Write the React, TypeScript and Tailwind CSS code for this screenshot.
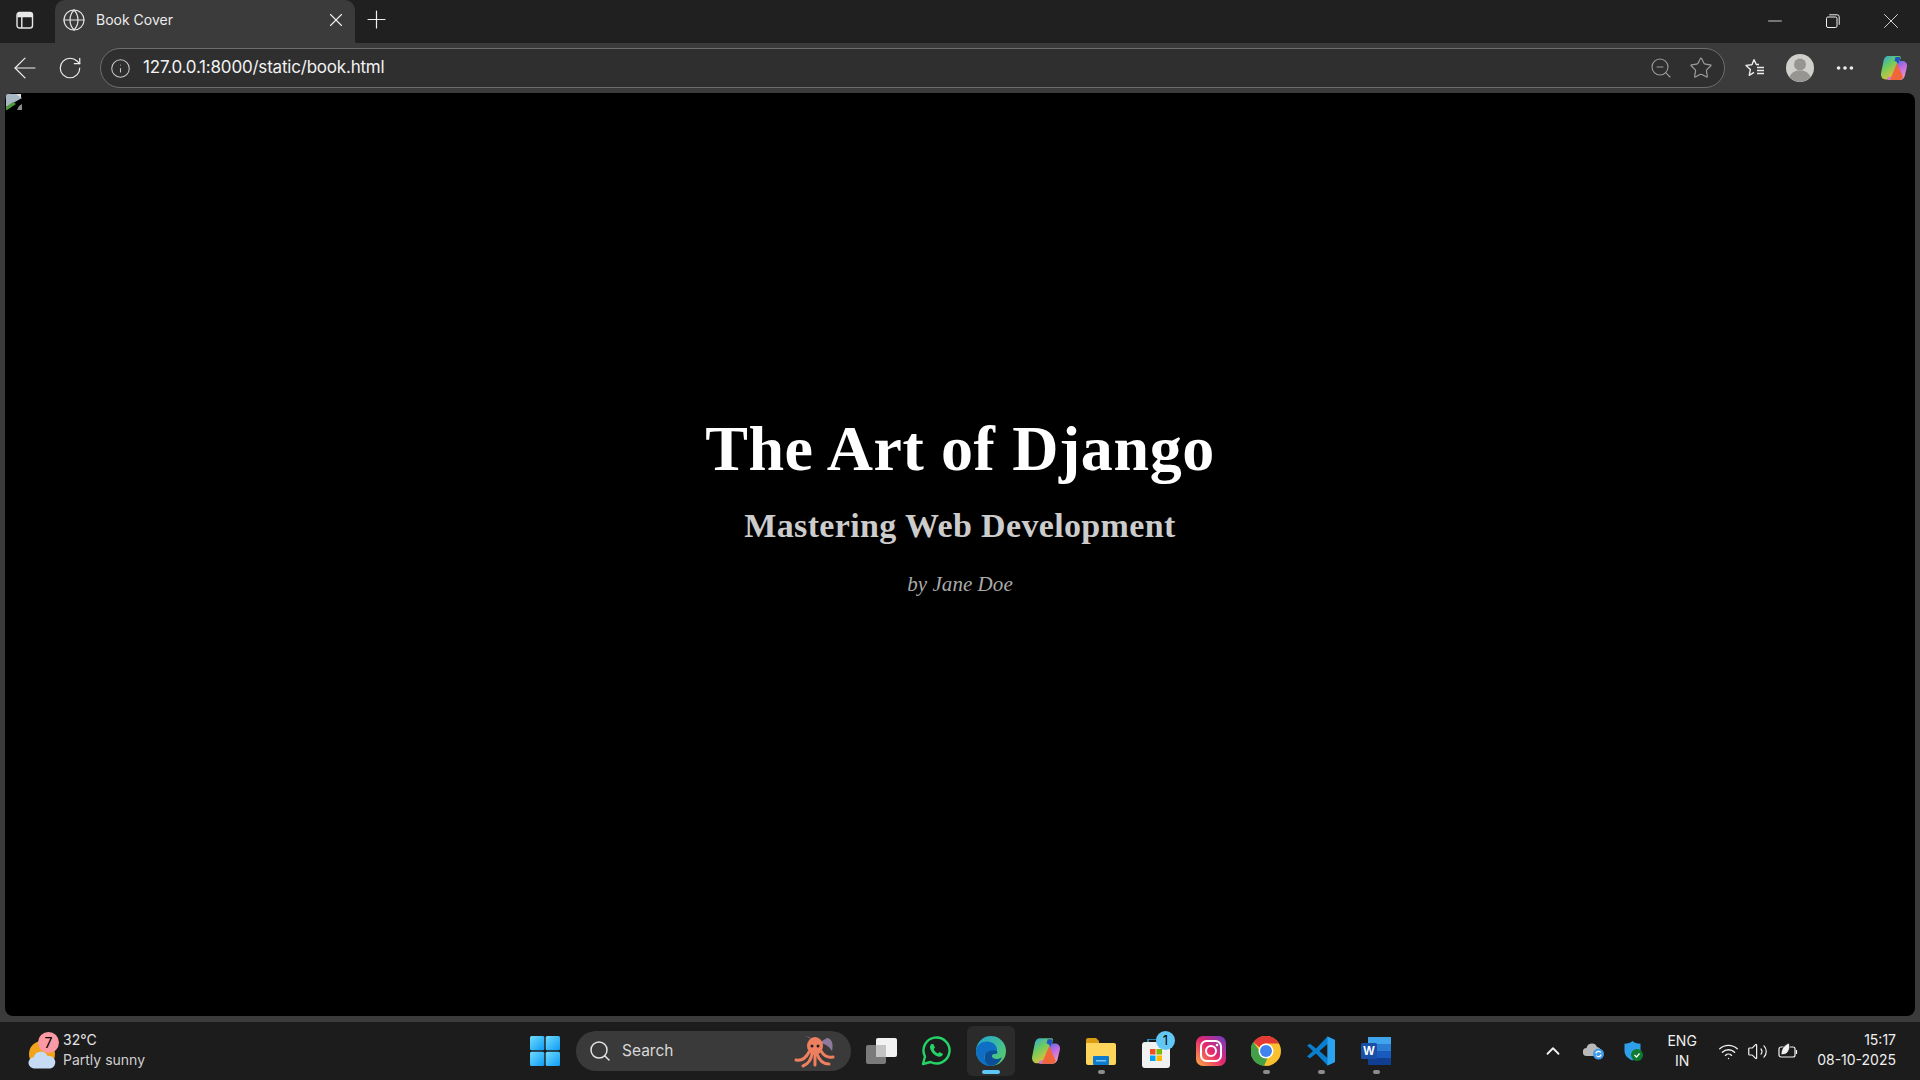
import React from "react";
import { ArrowLeft, RotateCw, Info, Globe, X, Plus, Minus, ZoomOut, Star, MoreHorizontal, ChevronUp, Search, Wifi, Volume2 } from "lucide-react";

const UI_FONT = "font-['Inter','Noto_Sans',sans-serif]";

const SidebarIcon = () => (
  <svg width="18" height="18" viewBox="0 0 18 18" fill="none" stroke="#e8e8e8" strokeWidth="1.4">
    <rect x="1" y="1.5" width="15.5" height="15.5" rx="2.5" />
    <path d="M1 5.5h15.5M5.8 5.5v11.5" />
    <rect x="1.5" y="2" width="14.5" height="3.5" fill="#e8e8e8" stroke="none" />
  </svg>
);

const RestoreIcon = () => (
  <svg width="14" height="14" viewBox="0 0 14 14" fill="none" stroke="#f0f0f0" strokeWidth="1">
    <rect x="0.5" y="3" width="10.5" height="10.5" rx="1.5" />
    <path d="M3.2 0.8h8a2 2 0 0 1 2 2v8" />
  </svg>
);

const FavoritesIcon = () => (
  <svg width="22" height="22" viewBox="0 0 22 22" fill="none" stroke="#ececec" strokeWidth="1.4" strokeLinejoin="round">
    <path d="M10 2.500l2.300 5H15M8 7.700l-6 .7 4.400 4-1.200 6 4.800-3M8 7.700l2-5.200" />
    <path d="M13 10.500h7M13 13.500h7M13 16.500h7" />
  </svg>
);

const Avatar = () => (
  <svg width="28" height="28" viewBox="0 0 28 28">
    <circle cx="14" cy="14" r="14" fill="#d0cfcb" />
    <circle cx="14" cy="10.500" r="6" fill="#979592" />
    <path d="M3.500 23c2-5 6-6.500 10.500-6.500s8.500 1.500 10.500 6.500a14 14 0 0 1-21 0z" fill="#979592" />
  </svg>
);

const CopilotIcon = ({ size = 28, id }: { size?: number; id: string }) => (
  <svg width={size} height={size} viewBox="0 0 28 28">
    <defs>
      <linearGradient id={id + "a"} x1="0" y1="0" x2="0.6" y2="1">
        <stop offset="0" stopColor="#27a4e8" />
        <stop offset="0.45" stopColor="#6ccb5f" />
        <stop offset="1" stopColor="#f5c030" />
      </linearGradient>
      <linearGradient id={id + "b"} x1="0.2" y1="0" x2="0.8" y2="1">
        <stop offset="0" stopColor="#3a6fe0" />
        <stop offset="0.5" stopColor="#c46be0" />
        <stop offset="1" stopColor="#f0a0c0" />
      </linearGradient>
    </defs>
    <path d="M8 2h11c1.500 0 2 1.200 1.500 2.500L14 23c-.5 1.500-1.500 2.500-3.500 2.500H6C2.500 25.500 0.500 22.500 1 19.500L3.500 7C4 4 5.500 2 8 2z" fill={`url(#${id}a)`} />
    <path d="M16 7h6.500c3 0 5 2.500 4.500 5.500L25 21c-.5 3-2.500 5-5.500 5H9c-1.500 0-2-1.200-1.500-2.500L8 23c3 0 4.500-.5 5.500-3l4-11c.3-1 0-2-1.500-2z" fill={`url(#${id}b)`} />
    <path d="M17 9l-7 17h9c2 0 3.500-1 4-3z" fill="#f0663a" />
    <path d="M15.500 3h3.500c1.500 0 1.500 1.200 1 2.500L18 10c-1-2-2-3-3.500-3z" fill="#1d55c4" />
  </svg>
);

const BrokenImage = () => (
  <svg width="16" height="16" viewBox="0 0 16 16">
    <path d="M0 2a2 2 0 0 1 2-2h9l5 4-16 9z" fill="#a9b6c4" />
    <path d="M0 13l7-5 3 2-9 6H0z" fill="#4f9a3c" />
    <path d="M10 0l5 0v4z" fill="#e0e0e0" />
    <path d="M13 12l3-2v6h-5z" fill="#8c8c8c" />
  </svg>
);

const WeatherIcon = () => (
  <div className="relative h-[40px] w-[36px]">
    <div className="absolute left-[4px] top-[10px] h-[26px] w-[26px] rounded-full bg-[#f2a31b]" />
    <svg className="absolute left-[3px] top-[19px]" width="30" height="20" viewBox="0 0 32 20">
      <path d="M7 19a6 6 0 0 1-1-12 8 8 0 0 1 15-1 6.500 6.500 0 0 1 3 13z" fill="#c6dcf5" />
    </svg>
    <div className="absolute left-[13px] top-[1px] flex h-[21px] w-[21px] items-center justify-center rounded-full bg-[#fb99a5] text-[14px] leading-none text-black">
      7
    </div>
  </div>
);

const WindowsLogo = () => (
  <svg width="30" height="30" viewBox="0 0 30 30">
    <defs>
      <linearGradient id="winLogo" x1="0" y1="0" x2="1" y2="1">
        <stop offset="0" stopColor="#6fdcfb" />
        <stop offset="1" stopColor="#0f9bf5" />
      </linearGradient>
    </defs>
    <rect x="0" y="0" width="14.300" height="14.300" rx="1.500" fill="url(#winLogo)" />
    <rect x="15.700" y="0" width="14.300" height="14.300" rx="1.500" fill="url(#winLogo)" />
    <rect x="0" y="15.700" width="14.300" height="14.300" rx="1.500" fill="url(#winLogo)" />
    <rect x="15.700" y="15.700" width="14.300" height="14.300" rx="1.500" fill="url(#winLogo)" />
  </svg>
);

const Octopus = () => (
  <svg width="50" height="36" viewBox="0 0 50 36" fill="none">
    <path d="M14 3c5 1 10 3 12 8l10-6c4 0 7 5 5 13-2-3-4-5-6-6z" fill="#a48bb5" opacity="0.8" />
    <ellipse cx="24" cy="13" rx="8" ry="9" fill="#ee8060" />
    <g stroke="#ee7f5f" strokeWidth="3" strokeLinecap="round">
      <path d="M18 19c-3 6-7 9-13 8" />
      <path d="M21 21c-1 6-4 10-9 12" />
      <path d="M26 21c2 6 6 10 12 10" />
      <path d="M30 18c3 5 7 7 12 6" />
      <path d="M24 21v11" />
    </g>
    <circle cx="21" cy="13" r="1.500" fill="#222" />
    <circle cx="27" cy="13" r="1.500" fill="#222" />
  </svg>
);

const TaskView = () => (
  <svg width="32" height="30" viewBox="0 0 32 30">
    <rect x="10" y="2" width="21" height="19" rx="2" fill="#f2f2f2" />
    <rect x="0" y="9" width="20" height="19" rx="2" fill="#7a7a7a" />
    <rect x="10" y="9" width="10" height="12" fill="#c4c4c4" />
  </svg>
);

const WhatsApp = () => (
  <svg width="30" height="30" viewBox="0 0 30 30" fill="none">
    <path d="M2 28l2-7.500A13 13 0 1 1 9.500 26z" stroke="#25d366" strokeWidth="2.400" strokeLinejoin="round" fill="#1c1c1c" />
    <path d="M10.500 8c-1.500 1-2 3-1 5.500 1.500 3.500 4 6 7.500 7 2.500.7 4.500-.5 5-2.500l-3.500-2-1.500 1.500c-2-.8-3.500-2.500-4.300-4.300L14 11.500 12.300 8z" fill="#25d366" />
  </svg>
);

const EdgeIcon = () => (
  <svg width="30" height="30" viewBox="0 0 30 30">
    <defs>
      <linearGradient id="edgeTop" x1="0" y1="0" x2="1" y2="1">
        <stop offset="0" stopColor="#1fa5d8" />
        <stop offset="1" stopColor="#5fd35c" />
      </linearGradient>
    </defs>
    <circle cx="15" cy="15" r="15" fill="url(#edgeTop)" />
    <path d="M0 15C1 7 8 4.500 14 6c5 1.200 7.500 5 7 9-5 1-11 .5-12.500 5-1 3 1.500 7 6 10C6 30 0 23 0 15z" fill="#0e6fc4" />
    <path d="M9 19c2-5 8-5 12-4 1 2 0 3-2 3-3 0-4 2-2 4 2 1.500 6 1.500 9-1-2 6-7 9-12 9-4-2-6.500-6-5-11z" fill="#0c4f97" />
  </svg>
);

const FolderIcon = () => (
  <svg width="30" height="28" viewBox="0 0 30 28">
    <path d="M0 3a2 2 0 0 1 2-2h8l3 3h0v4H0z" fill="#d99c12" />
    <path d="M0 6h28a2 2 0 0 1 2 2v18a2 2 0 0 1-2 2H2a2 2 0 0 1-2-2z" fill="#fcd55a" />
    <rect x="7" y="19" width="16" height="9" rx="1" fill="#0a7bd0" />
    <rect x="10" y="23" width="10" height="1.500" fill="#7cc4f0" />
  </svg>
);

const StoreIcon = () => (
  <div className="relative h-[40px] w-[36px]">
    <svg className="absolute left-[1px] top-[8px]" width="30" height="30" viewBox="0 0 30 30">
      <path d="M7 3V0h14v3" fill="none" stroke="#2aa7e8" strokeWidth="1.500" />
      <rect x="1" y="3" width="28" height="26" rx="3" fill="#f1f1f1" />
      <rect x="9" y="10" width="5.500" height="5.500" fill="#f25022" />
      <rect x="15.500" y="10" width="5.500" height="5.500" fill="#7fba00" />
      <rect x="9" y="16.500" width="5.500" height="5.500" fill="#00a4ef" />
      <rect x="15.500" y="16.500" width="5.500" height="5.500" fill="#ffb900" />
    </svg>
    <div className="absolute left-[16px] top-[0px] flex h-[19px] w-[19px] items-center justify-center rounded-full bg-[#63c7f5] text-[13px] leading-none text-black">
      1
    </div>
  </div>
);

const InstagramIcon = () => (
  <svg width="30" height="30" viewBox="0 0 30 30" fill="none">
    <defs>
      <linearGradient id="igGrad" x1="0" y1="1" x2="1" y2="0">
        <stop offset="0" stopColor="#fdb040" />
        <stop offset="0.5" stopColor="#e6276e" />
        <stop offset="1" stopColor="#6a3ec8" />
      </linearGradient>
    </defs>
    <rect width="30" height="30" rx="7" fill="url(#igGrad)" />
    <rect x="5" y="5" width="20" height="20" rx="5.500" stroke="#fff" strokeWidth="2" />
    <circle cx="15" cy="15" r="5" stroke="#fff" strokeWidth="2" />
    <circle cx="21" cy="9" r="1.300" fill="#fff" />
  </svg>
);

const ChromeIcon = () => (
  <svg width="30" height="30" viewBox="0 0 30 30">
    <circle cx="15" cy="15" r="15" fill="#fbc02d" />
    <path d="M15 0a15 15 0 0 1 13 7.500H15a7.500 7.500 0 0 0-6.500 3.750L2.300 6A15 15 0 0 1 15 0z" fill="#e53935" />
    <path d="M2.300 6l6.200 9a7.500 7.500 0 0 0 8 7l-3.500 7.900A15 15 0 0 1 2.300 6z" fill="#43a047" />
    <circle cx="15" cy="15" r="7.500" fill="#fff" />
    <circle cx="15" cy="15" r="6" fill="#3f84ee" />
  </svg>
);

const VsCodeIcon = () => (
  <svg width="30" height="30" viewBox="0 0 30 30">
    <path d="M21.500 0.500L29 4v22l-7.500 3.500L10 17.500l-6 4.800L1 20.500 7 15 1 9.500l3-1.800 6 4.800z" fill="#0a7fcf" />
    <path d="M21.500 8L13.500 15l8 7z" fill="#1c1c1c" />
    <path d="M21.500 0.500L29 4v22l-7.500 3.500z" fill="#2aa4ee" />
  </svg>
);

const WordIcon = () => (
  <svg width="30" height="28" viewBox="0 0 30 28">
    <rect x="7" y="0" width="23" height="7" fill="#41a5ee" />
    <rect x="7" y="7" width="23" height="7" fill="#2b7cd3" />
    <rect x="7" y="14" width="23" height="7" fill="#185abd" />
    <rect x="7" y="21" width="23" height="7" fill="#103f91" />
    <rect x="0" y="6" width="16" height="16" rx="1.500" fill="#1a4fa8" />
    <text x="8" y="18" textAnchor="middle" fontSize="12" fontWeight="700" fill="#fff" fontFamily="Liberation Sans, sans-serif">W</text>
  </svg>
);

const CloudSync = () => (
  <svg width="22" height="20" viewBox="0 0 22 20">
    <path d="M4 15a4 4 0 0 1-.5-8 5.500 5.500 0 0 1 10.500-1 5 5 0 0 1 2 9z" fill="#b9b9b9" />
    <circle cx="15.500" cy="13" r="5.500" fill="#3f9ae8" />
    <path d="M12.800 12.500a2.800 2.800 0 0 1 5-1M18.200 13.500a2.800 2.800 0 0 1-5 1" stroke="#fff" strokeWidth="1.200" fill="none" />
  </svg>
);

const ShieldIcon = () => (
  <svg width="22" height="22" viewBox="0 0 22 22">
    <path d="M9.500 1c2 1.800 4.500 2.700 8 2.700V11c0 4.500-3.500 7.500-8 9.500-4.500-2-8-5-8-9.500V3.700c3.500 0 6-.9 8-2.700z" fill="#2e9fe8" />
    <circle cx="14" cy="15" r="6" fill="#0f7b2e" />
    <path d="M11.500 15l2 2 3-3.500" stroke="#fff" strokeWidth="1.200" fill="none" />
  </svg>
);

const BatteryLeaf = () => (
  <svg width="20" height="18" viewBox="0 0 20 18" fill="none" stroke="#f2f2f2" strokeWidth="1.200">
    <rect x="1" y="5" width="16" height="10" rx="2" />
    <path d="M18.500 8v4" />
    <path d="M3 13C3 7 6 3 11 1c1.500 4 .5 8-3 11z" fill="#f2f2f2" stroke="#1c1c1c" strokeWidth="0.800" />
  </svg>
);

const TitleBar = () => (
  <div className="flex h-[43px] shrink-0 items-end bg-[#202020] text-white">
    <div className="flex h-[43px] w-[55px] items-center justify-center pb-[3px] pr-[5px]">
      <SidebarIcon />
    </div>
    <div className="flex h-[43px] w-[300px] items-center rounded-t-[10px] bg-[#3b3b3b] pb-[4px] pl-[7px] pr-[8px]">
      <Globe size={24} strokeWidth={1.200} color="#e4e4e4" />
      <span className="ml-[10px] flex-1 text-[14px] text-[#ececec]">Book Cover</span>
      <X size={22} strokeWidth={1.200} color="#f0f0f0" />
    </div>
    <div className="flex h-[43px] w-[42px] items-center justify-center pb-[4px] pl-[1px]">
      <Plus size={29} strokeWidth={1} color="#f0f0f0" />
    </div>
    <div className="flex-1" />
    <div className="flex h-[43px] items-center pb-[2px]">
      <div className="flex w-[58px] justify-center"><Minus size={22} strokeWidth={0.900} color="#f0f0f0" /></div>
      <div className="flex w-[58px] justify-center"><RestoreIcon /></div>
      <div className="flex w-[58px] justify-center"><X size={26} strokeWidth={0.800} color="#f0f0f0" /></div>
    </div>
  </div>
);

const Toolbar = () => (
  <div className="flex h-[50px] shrink-0 items-center bg-[#3b3b3b]">
    <div className="flex w-[47px] justify-center pl-[3px]"><ArrowLeft size={34} strokeWidth={0.850} color="#f0f0f0" /></div>
    <div className="flex w-[45px] justify-center"><RotateCw size={26} strokeWidth={1.100} color="#f0f0f0" /></div>
    <div className="ml-[8px] flex h-[40px] w-[1625px] items-center rounded-full border border-[#6e6e6e] bg-[#2f2f2f] pl-[9px] pr-[11px]">
      <Info size={21} strokeWidth={1.200} color="#c8c8c8" />
      <span className="ml-[12px] flex-1 text-[17px] tracking-[-0.2px] text-[#f2f2f2]">127.0.0.1:8000/static/book.html</span>
      <ZoomOut size={24} strokeWidth={1.100} color="#9c9c9c" />
      <Star className="ml-[16px]" size={24} strokeWidth={1.200} color="#9c9c9c" />
    </div>
    <div className="flex w-[61px] justify-center pr-[1px]"><FavoritesIcon /></div>
    <Avatar />
    <div className="flex w-[61px] justify-center"><MoreHorizontal size={22} strokeWidth={2} color="#ececec" /></div>
    <div className="flex w-[38px] justify-center"><CopilotIcon id="copilotBar" /></div>
  </div>
);

const BrowserPage = () => (
  <div className="flex min-h-0 flex-1 bg-[#3b3b3b] px-[5px] pb-[6px]">
    <main className="relative flex flex-1 flex-col items-center justify-center rounded-[8px] bg-black pb-[102px] font-['Liberation_Serif',serif]">
      <div className="absolute left-[1px] top-[1px]"><BrokenImage /></div>
      <h1 className="text-[64px] font-bold leading-[74px] tracking-[0.6px] text-white">The Art of Django</h1>
      <h2 className="mt-[20px] text-[34px] font-bold leading-[39px] tracking-[0.36px] text-[#cccccc]">Mastering Web Development</h2>
      <p className="mt-[27px] text-[21px] italic leading-[24px] tracking-[0.05px] text-[#aaaaaa]">by Jane Doe</p>
    </main>
  </div>
);

const Taskbar = () => (
  <div className="relative flex h-[58px] shrink-0 items-center bg-[#1c1c1c] text-white">
    <div className="flex w-[526px] items-center pl-[25px]">
      <WeatherIcon />
      <div className="ml-[2px] flex -translate-y-[1px] flex-col text-[14px] leading-[20px] text-[#e6e6e6]">
        <span>32°C</span>
        <span className="text-[#d0d0d0]">Partly sunny</span>
      </div>
    </div>
    <div className="flex items-center">
      <div className="flex w-[37px] justify-center pl-[1px]"><WindowsLogo /></div>
      <div className="ml-[13px] flex h-[40px] w-[275px] items-center rounded-full bg-[#3a3a3a] pl-[12px] pr-[10px]">
        <Search size={24} strokeWidth={1.500} color="#e4e4e4" />
        <span className="ml-[10px] flex-1 text-[15.5px] text-[#d8d8d8]">Search</span>
        <Octopus />
      </div>
      <div className="ml-[12px] flex h-[48px] w-[37px] items-center justify-center"><TaskView /></div>
      <div className="ml-[17px] flex h-[48px] w-[37px] items-center justify-center"><WhatsApp /></div>
      <div className="relative ml-[13px] flex h-[50px] w-[48px] items-center justify-center rounded-[6px] bg-[#2b2b2b]">
        <EdgeIcon />
        <div className="absolute bottom-[2px] h-[4px] w-[18px] rounded-full bg-[#5cc6f7]" />
      </div>
      <div className="ml-[16px] flex h-[48px] w-[30px] items-center justify-center"><CopilotIcon size={30} id="copilotTask" /></div>
      <div className="relative ml-[25px] flex h-[48px] w-[30px] items-center justify-center">
        <FolderIcon />
        <div className="absolute bottom-[1px] h-[4px] w-[7px] rounded-full bg-[#8c8c8c]" />
      </div>
      <div className="ml-[24px] flex h-[48px] w-[36px] items-center justify-center"><StoreIcon /></div>
      <div className="ml-[20px] flex h-[48px] w-[30px] items-center justify-center"><InstagramIcon /></div>
      <div className="relative ml-[25px] flex h-[48px] w-[30px] items-center justify-center">
        <ChromeIcon />
        <div className="absolute bottom-[1px] h-[4px] w-[7px] rounded-full bg-[#8c8c8c]" />
      </div>
      <div className="relative ml-[25px] flex h-[48px] w-[30px] items-center justify-center">
        <VsCodeIcon />
        <div className="absolute bottom-[1px] h-[4px] w-[7px] rounded-full bg-[#8c8c8c]" />
      </div>
      <div className="relative ml-[25px] flex h-[48px] w-[30px] items-center justify-center">
        <WordIcon />
        <div className="absolute bottom-[1px] h-[4px] w-[7px] rounded-full bg-[#8c8c8c]" />
      </div>
    </div>
    <div className="flex-1" />
    <div className="flex items-center pr-[24px] text-[#f0f0f0]">
      <ChevronUp size={22} strokeWidth={2} color="#f0f0f0" />
      <div className="ml-[19px]"><CloudSync /></div>
      <div className="ml-[18px]"><ShieldIcon /></div>
      <div className="ml-[18px] flex w-[38px] flex-col items-center text-[14px] leading-[20px]">
        <span>ENG</span>
        <span>IN</span>
      </div>
      <div className="ml-[17px]"><Wifi size={21} strokeWidth={1.600} color="#f0f0f0" /></div>
      <div className="ml-[8px]"><Volume2 size={21} strokeWidth={1.400} color="#f0f0f0" /></div>
      <div className="ml-[10px]"><BatteryLeaf /></div>
      <div className="ml-[19px] flex -translate-y-[1px] flex-col items-end text-[14px] leading-[20px]">
        <span>15:17</span>
        <span>08-10-2025</span>
      </div>
    </div>
  </div>
);

export default function App() {
  return (
    <div className={`flex h-screen w-full flex-col overflow-hidden ${UI_FONT}`}>
      <TitleBar />
      <Toolbar />
      <BrowserPage />
      <Taskbar />
    </div>
  );
}
